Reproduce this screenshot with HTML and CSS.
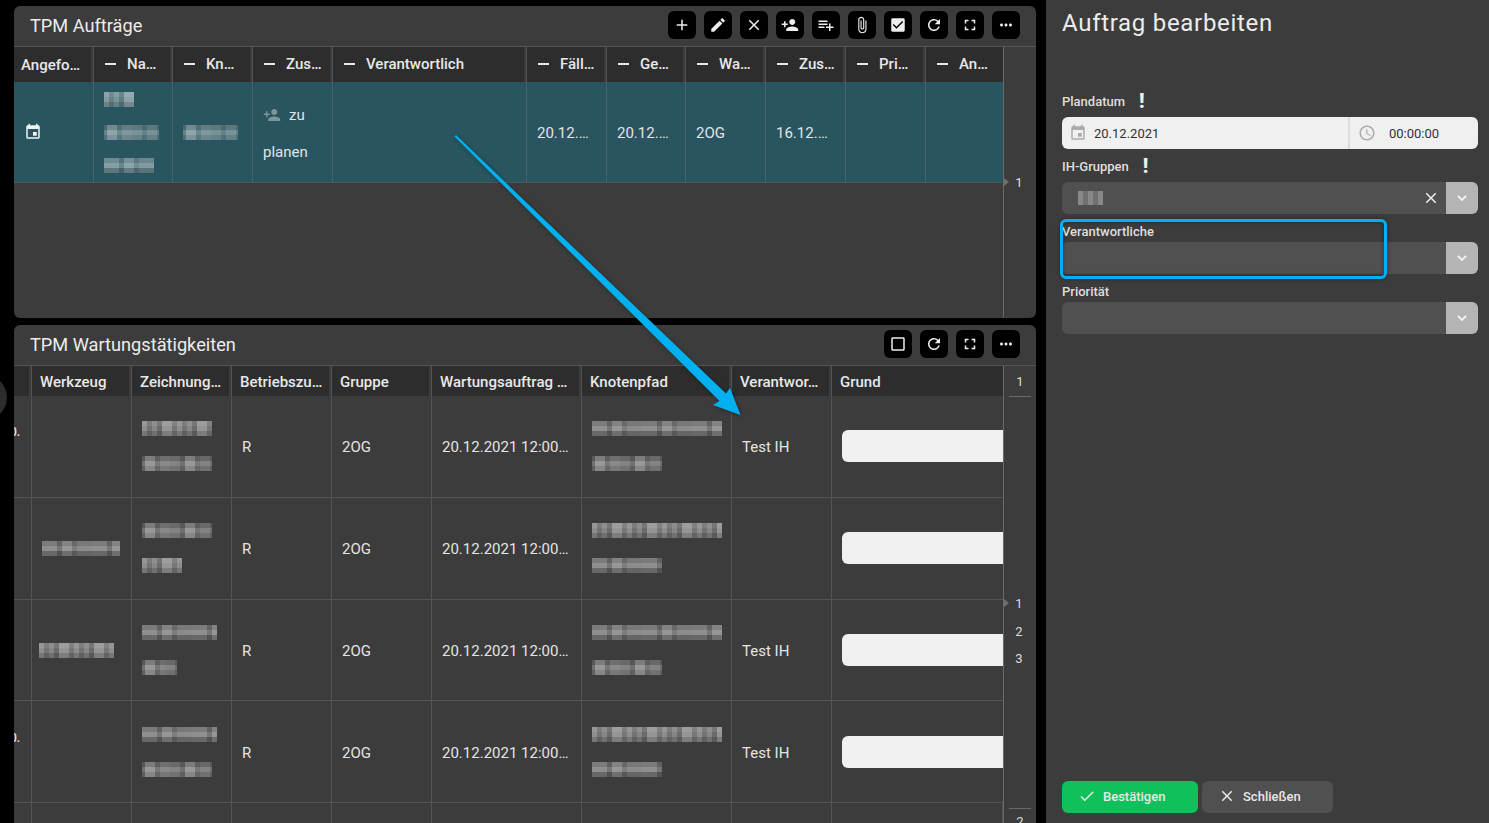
FILE: index.html
```html
<!DOCTYPE html>
<html lang="de">
<head>
<meta charset="UTF-8">
<title>TPM Aufträge</title>
<link rel="stylesheet" href="styles.css">
</head>
<body>
<svg class="icon-defs" xmlns="http://www.w3.org/2000/svg">
    <symbol id="i-plus" viewBox="0 0 24 24"><path d="M19 13h-6v6h-2v-6H5v-2h6V5h2v6h6v2z"/></symbol>
    <symbol id="i-edit" viewBox="0 0 24 24"><path d="M3 17.25V21h3.75L17.81 9.94l-3.75-3.75L3 17.25zM20.71 7.04a1 1 0 0 0 0-1.41l-2.34-2.34a1 1 0 0 0-1.41 0l-1.83 1.83 3.75 3.75 1.83-1.83z"/></symbol>
    <symbol id="i-close" viewBox="0 0 24 24"><path d="M19 6.41L17.59 5 12 10.59 6.41 5 5 6.41 10.59 12 5 17.59 6.41 19 12 13.41 17.59 19 19 17.59 13.41 12z"/></symbol>
    <symbol id="i-person-add" viewBox="0 0 24 24"><path d="M15 12c2.21 0 4-1.79 4-4s-1.79-4-4-4-4 1.79-4 4 1.79 4 4 4zm-9-2V7H4v3H1v2h3v3h2v-3h3v-2H6zm9 4c-2.67 0-8 1.34-8 4v2h16v-2c0-2.66-5.33-4-8-4z"/></symbol>
    <symbol id="i-playlist" viewBox="0 0 24 24"><path d="M14 10H2v2h12v-2zm0-4H2v2h12V6zm4 8v-4h-2v4h-4v2h4v4h2v-4h4v-2h-4zM2 16h8v-2H2v2z"/></symbol>
    <symbol id="i-attach" viewBox="0 0 24 24"><path d="M16.5 6v11.5c0 2.21-1.79 4-4 4s-4-1.79-4-4V5c0-1.38 1.12-2.5 2.5-2.5s2.5 1.12 2.5 2.5v10.5c0 .55-.45 1-1 1s-1-.45-1-1V6H10v9.5c0 1.38 1.12 2.5 2.5 2.5s2.5-1.12 2.5-2.5V5c0-2.21-1.79-4-4-4S7 2.79 7 5v12.5c0 3.04 2.46 5.5 5.5 5.5s5.5-2.46 5.5-5.5V6h-1.5z"/></symbol>
    <symbol id="i-checkbox" viewBox="0 0 24 24"><path d="M19 3H5c-1.11 0-2 .9-2 2v14c0 1.1.89 2 2 2h14c1.11 0 2-.9 2-2V5c0-1.1-.89-2-2-2zm-9 14l-5-5 1.41-1.41L10 14.17l7.59-7.59L19 8l-9 9z"/></symbol>
    <symbol id="i-checkbox-blank" viewBox="0 0 24 24"><path d="M19 5v14H5V5h14m0-2H5c-1.1 0-2 .9-2 2v14c0 1.1.9 2 2 2h14c1.1 0 2-.9 2-2V5c0-1.1-.9-2-2-2z"/></symbol>
    <symbol id="i-refresh" viewBox="0 0 24 24"><path d="M17.65 6.35A7.958 7.958 0 0 0 12 4c-4.42 0-7.99 3.58-7.99 8s3.57 8 7.99 8c3.73 0 6.84-2.55 7.73-6h-2.08A5.99 5.99 0 0 1 12 18c-3.31 0-6-2.69-6-6s2.69-6 6-6c1.66 0 3.14.69 4.22 1.78L13 11h7V4l-2.35 2.35z"/></symbol>
    <symbol id="i-fullscreen" viewBox="0 0 24 24"><path d="M7 14H5v5h5v-2H7v-3zm-2-4h2V7h3V5H5v5zm12 7h-3v2h5v-5h-2v3zM14 5v2h3v3h2V5h-5z"/></symbol>
    <symbol id="i-more" viewBox="0 0 24 24"><path d="M6 10c-1.1 0-2 .9-2 2s.9 2 2 2 2-.9 2-2-.9-2-2-2zm12 0c-1.1 0-2 .9-2 2s.9 2 2 2 2-.9 2-2-.9-2-2-2zm-6 0c-1.1 0-2 .9-2 2s.9 2 2 2 2-.9 2-2-.9-2-2-2z"/></symbol>
    <symbol id="i-event" viewBox="0 0 24 24"><path d="M17 12h-5v5h5v-5zM16 1v2H8V1H6v2H5c-1.11 0-1.99.9-1.99 2L3 19a2 2 0 0 0 2 2h14c1.1 0 2-.9 2-2V5c0-1.1-.9-2-2-2h-1V1h-2zm3 18H5V8h14v11z"/></symbol>
    <symbol id="i-clock" viewBox="0 0 24 24"><path d="M11.99 2C6.47 2 2 6.48 2 12s4.47 10 9.99 10C17.52 22 22 17.52 22 12S17.52 2 11.99 2zM12 20c-4.42 0-8-3.58-8-8s3.58-8 8-8 8 3.58 8 8-3.58 8-8 8zm.5-13H11v6l5.25 3.15.75-1.23-4.5-2.67z"/></symbol>
    <symbol id="i-check" viewBox="0 0 24 24"><path d="M9 16.17L4.83 12l-1.42 1.41L9 19 21 7l-1.41-1.41z"/></symbol>
    <symbol id="i-chevron" viewBox="0 0 24 24"><path d="M16.59 8.59L12 13.17 7.41 8.59 6 10l6 6 6-6z"/></symbol>
</svg>

<div class="app">
    <div class="left-column">
        <section class="panel panel-orders">
            <header class="panel-header">
                <h2 class="panel-title">TPM Aufträge</h2>
                <div class="toolbar">
                    <button class="tool-btn"><svg class="icon"><use href="#i-plus"/></svg></button>
                    <button class="tool-btn"><svg class="icon"><use href="#i-edit"/></svg></button>
                    <button class="tool-btn"><svg class="icon"><use href="#i-close"/></svg></button>
                    <button class="tool-btn"><svg class="icon"><use href="#i-person-add"/></svg></button>
                    <button class="tool-btn"><svg class="icon"><use href="#i-playlist"/></svg></button>
                    <button class="tool-btn"><svg class="icon"><use href="#i-attach"/></svg></button>
                    <button class="tool-btn"><svg class="icon"><use href="#i-checkbox"/></svg></button>
                    <button class="tool-btn"><svg class="icon"><use href="#i-refresh"/></svg></button>
                    <button class="tool-btn"><svg class="icon"><use href="#i-fullscreen"/></svg></button>
                    <button class="tool-btn"><svg class="icon"><use href="#i-more"/></svg></button>
                </div>
            </header>
            <div class="table-wrap">
                <div class="grid grid-orders">
                    <div class="th"><span class="th-text">Angefo…</span></div>
                    <div class="th th-group"><span class="dash"></span><span class="th-text">Na…</span></div>
                    <div class="th th-group"><span class="dash"></span><span class="th-text">Kn…</span></div>
                    <div class="th th-group"><span class="dash"></span><span class="th-text">Zus…</span></div>
                    <div class="th th-group"><span class="dash"></span><span class="th-text">Verantwortlich</span></div>
                    <div class="th th-group"><span class="dash"></span><span class="th-text">Fäll…</span></div>
                    <div class="th th-group"><span class="dash"></span><span class="th-text">Ge…</span></div>
                    <div class="th th-group"><span class="dash"></span><span class="th-text">Wa…</span></div>
                    <div class="th th-group"><span class="dash"></span><span class="th-text">Zus…</span></div>
                    <div class="th th-group"><span class="dash"></span><span class="th-text">Pri…</span></div>
                    <div class="th th-group"><span class="dash"></span><span class="th-text">An…</span></div>

                    <div class="td td-selected td-icon"><svg class="icon icon-event"><use href="#i-event"/></svg></div>
                    <div class="td td-selected"><div class="stack stack-name"><span class="mosaic w30"></span><span class="mosaic mosaic-b w55"></span><span class="mosaic mosaic-c w50"></span></div></div>
                    <div class="td td-selected"><span class="mosaic mosaic-b w55"></span></div>
                    <div class="td td-selected td-state">
                        <div class="state-line"><svg class="icon icon-person"><use href="#i-person-add"/></svg><span>zu</span></div>
                        <div class="state-line">planen</div>
                    </div>
                    <div class="td td-selected"></div>
                    <div class="td td-selected"><span class="td-text">20.12.…</span></div>
                    <div class="td td-selected"><span class="td-text">20.12.…</span></div>
                    <div class="td td-selected"><span class="td-text">2OG</span></div>
                    <div class="td td-selected"><span class="td-text">16.12.…</span></div>
                    <div class="td td-selected"></div>
                    <div class="td td-selected"></div>
                </div>
                <aside class="rail">
                    <div class="rail-num rail-current rail-orders">1</div>
                </aside>
            </div>
        </section>

        <section class="panel panel-tasks">
            <header class="panel-header">
                <h2 class="panel-title">TPM Wartungstätigkeiten</h2>
                <div class="toolbar">
                    <button class="tool-btn"><svg class="icon"><use href="#i-checkbox-blank"/></svg></button>
                    <button class="tool-btn"><svg class="icon"><use href="#i-refresh"/></svg></button>
                    <button class="tool-btn"><svg class="icon"><use href="#i-fullscreen"/></svg></button>
                    <button class="tool-btn"><svg class="icon"><use href="#i-more"/></svg></button>
                </div>
            </header>
            <div class="table-wrap">
                <div class="grid grid-tasks">
                    <div class="th"></div>
                    <div class="th"><span class="th-text">Werkzeug</span></div>
                    <div class="th"><span class="th-text">Zeichnung…</span></div>
                    <div class="th"><span class="th-text">Betriebszu…</span></div>
                    <div class="th"><span class="th-text">Gruppe</span></div>
                    <div class="th"><span class="th-text">Wartungsauftrag …</span></div>
                    <div class="th"><span class="th-text">Knotenpfad</span></div>
                    <div class="th"><span class="th-text">Verantwor…</span></div>
                    <div class="th"><span class="th-text">Grund</span></div>

                    <div class="td td-cut"><span>0.</span></div>
                    <div class="td"></div>
                    <div class="td"><div class="stack"><span class="mosaic w70"></span><span class="mosaic mosaic-b w70"></span></div></div>
                    <div class="td"><span class="td-text">R</span></div>
                    <div class="td"><span class="td-text">2OG</span></div>
                    <div class="td"><span class="td-text">20.12.2021 12:00…</span></div>
                    <div class="td"><div class="stack"><span class="mosaic mosaic-c w130"></span><span class="mosaic mosaic-b w70"></span></div></div>
                    <div class="td"><span class="td-text">Test IH</span></div>
                    <div class="td td-reason"><span class="reason-input"></span></div>

                    <div class="td td-cut"></div>
                    <div class="td"><span class="mosaic mosaic-c w78"></span></div>
                    <div class="td"><div class="stack"><span class="mosaic mosaic-b w70"></span><span class="mosaic w40"></span></div></div>
                    <div class="td"><span class="td-text">R</span></div>
                    <div class="td"><span class="td-text">2OG</span></div>
                    <div class="td"><span class="td-text">20.12.2021 12:00…</span></div>
                    <div class="td"><div class="stack"><span class="mosaic w130"></span><span class="mosaic mosaic-c w70"></span></div></div>
                    <div class="td"></div>
                    <div class="td td-reason"><span class="reason-input"></span></div>

                    <div class="td td-cut"></div>
                    <div class="td"><span class="mosaic w75 nudge-left"></span></div>
                    <div class="td"><div class="stack"><span class="mosaic mosaic-c w75"></span><span class="mosaic mosaic-b w35"></span></div></div>
                    <div class="td"><span class="td-text">R</span></div>
                    <div class="td"><span class="td-text">2OG</span></div>
                    <div class="td"><span class="td-text">20.12.2021 12:00…</span></div>
                    <div class="td"><div class="stack"><span class="mosaic mosaic-c w130"></span><span class="mosaic mosaic-b w70"></span></div></div>
                    <div class="td"><span class="td-text">Test IH</span></div>
                    <div class="td td-reason"><span class="reason-input"></span></div>

                    <div class="td td-cut"><span>0.</span></div>
                    <div class="td"></div>
                    <div class="td"><div class="stack"><span class="mosaic mosaic-c w75"></span><span class="mosaic mosaic-b w70"></span></div></div>
                    <div class="td"><span class="td-text">R</span></div>
                    <div class="td"><span class="td-text">2OG</span></div>
                    <div class="td"><span class="td-text">20.12.2021 12:00…</span></div>
                    <div class="td"><div class="stack"><span class="mosaic w130"></span><span class="mosaic mosaic-c w70"></span></div></div>
                    <div class="td"><span class="td-text">Test IH</span></div>
                    <div class="td td-reason"><span class="reason-input"></span></div>

                    <div class="td td-cut"></div>
                    <div class="td"></div>
                    <div class="td"></div>
                    <div class="td"></div>
                    <div class="td"></div>
                    <div class="td"></div>
                    <div class="td"></div>
                    <div class="td"></div>
                    <div class="td"></div>
                </div>
                <aside class="rail">
                    <div class="rail-head">1</div>
                    <div class="rail-list">
                        <div class="rail-num rail-current">1</div>
                        <div class="rail-num">2</div>
                        <div class="rail-num">3</div>
                    </div>
                    <div class="rail-foot">2</div>
                </aside>
            </div>
        </section>
    </div>

    <aside class="sidebar">
        <h1 class="sidebar-title">Auftrag bearbeiten</h1>
        <form class="edit-form">
            <div class="field">
                <label class="field-label field-label-required">Plandatum<b class="required">!</b></label>
                <div class="date-input">
                    <div class="date-part"><svg class="icon icon-input"><use href="#i-event"/></svg><span>20.12.2021</span></div>
                    <div class="time-part"><svg class="icon icon-input"><use href="#i-clock"/></svg><span>00:00:00</span></div>
                </div>
            </div>
            <div class="field">
                <label class="field-label field-label-required">IH-Gruppen<b class="required">!</b></label>
                <div class="select">
                    <span class="select-value"><span class="mosaic mosaic-chip"></span></span>
                    <svg class="icon icon-clear"><use href="#i-close"/></svg>
                    <span class="select-arrow"><svg class="icon icon-chevron"><use href="#i-chevron"/></svg></span>
                </div>
            </div>
            <div class="field field-marked">
                <label class="field-label">Verantwortliche</label>
                <div class="select">
                    <span class="select-value"></span>
                    <span class="select-arrow"><svg class="icon icon-chevron"><use href="#i-chevron"/></svg></span>
                </div>
                <div class="highlight-box"></div>
            </div>
            <div class="field">
                <label class="field-label">Priorität</label>
                <div class="select">
                    <span class="select-value"></span>
                    <span class="select-arrow"><svg class="icon icon-chevron"><use href="#i-chevron"/></svg></span>
                </div>
            </div>
        </form>
        <footer class="sidebar-footer">
            <button class="action-btn action-confirm"><svg class="icon"><use href="#i-check"/></svg><span>Bestätigen</span></button>
            <button class="action-btn action-close"><svg class="icon"><use href="#i-close"/></svg><span>Schließen</span></button>
        </footer>
    </aside>
</div>

<div class="side-handle"></div>

<svg class="arrow-overlay" viewBox="0 0 1489 823" xmlns="http://www.w3.org/2000/svg">
    <polygon class="arrow-shape" points="454.5,136.5 456,135 726,393.5 730,388 740.5,415 713,405 719.5,401"/>
</svg>
</body>
</html>
```

FILE: styles.css
```css
:root {
    --panel-color: #3c3c3c;
    --head-color: #2d2d2d;
    --line-color: #545454;
    --text-color: #e4e4e4;
    --field-color: #505050;
    --input-color: #f0f0f0;
    --arrow-color: #00b0f0;
}
* {
    box-sizing: border-box;
}
html, body {
    height: 100%;
}
body {
    margin: 0;
    background-color: #000;
    color: var(--text-color);
    font-family: Roboto, "Liberation Sans", sans-serif;
    overflow: hidden;
}
.icon-defs {
    display: none;
}
.icon {
    display: block;
    width: 18px;
    height: 18px;
    fill: currentColor;
    flex: none;
}
.app {
    display: flex;
    height: 100vh;
}
.left-column {
    display: flex;
    flex-direction: column;
    gap: 7px;
    width: 1022px;
    margin-left: 14px;
    padding-top: 6px;
}
.panel {
    display: flex;
    flex-direction: column;
    background-color: var(--panel-color);
    border-radius: 6px 6px 0 0;
    overflow: hidden;
}
.panel-orders {
    height: 312px;
    border-radius: 6px;
}
.panel-tasks {
    flex: 1;
    min-height: 0;
}
.panel-header {
    display: flex;
    justify-content: space-between;
    align-items: center;
    flex: none;
    height: 41px;
    padding: 0 16px 2px;
    border-bottom: 1px solid var(--line-color);
}
.panel-title {
    margin: 0;
    font-size: 18.2px;
    font-weight: 400;
    color: #ececec;
}
.toolbar {
    display: flex;
    gap: 8px;
}
.tool-btn {
    display: flex;
    align-items: center;
    justify-content: center;
    width: 28px;
    height: 28px;
    padding: 0;
    border: none;
    border-radius: 6px;
    background-color: #000;
    color: #eee;
}
.table-wrap {
    display: flex;
    flex: 1;
    min-height: 0;
}
.grid {
    display: grid;
    width: 989px;
    flex: none;
    align-content: start;
}
.grid-orders {
    grid-template-columns: 80px 79px 80px 80px 194px 80px 79px 80px 80px 80px 77px;
    grid-template-rows: 35px 101px;
}
.grid-tasks {
    grid-template-columns: 18px 100px 100px 100px 100px 150px 150px 100px 171px;
    grid-template-rows: 30px 102px 102px 101px 102px 102px;
}
.th {
    display: flex;
    align-items: center;
    min-width: 0;
    padding: 0 0 0 8px;
    border-right: 1px solid var(--line-color);
    background: linear-gradient(var(--head-color), var(--head-color)) no-repeat left top / calc(100% - 2px) 100%;
    font-size: 15px;
    font-weight: 500;
    color: #e8e8e8;
}
.th:nth-child(11), .grid-tasks .th:nth-child(9) {
    border-right: none;
    background-size: 100% 100%;
}
.grid-orders .th:first-child {
    padding-left: 7px;
}
.grid-tasks .th {
    padding-top: 1px;
}
.th-group {
    padding-left: 11px;
    padding-bottom: 2px;
}
.th-text, .td-text {
    white-space: nowrap;
}
.dash {
    flex: none;
    width: 11px;
    height: 2px;
    margin-right: 11px;
    background-color: #e8e8e8;
}
.td {
    display: flex;
    align-items: center;
    min-width: 0;
    padding: 0 10px;
    border-right: 1px solid var(--line-color);
    border-bottom: 1px solid var(--line-color);
    font-size: 15px;
}
/* the first two task rows sit a pixel higher */
.grid-tasks .td:nth-child(-n+27) {
    padding-bottom: 1px;
}
.td-text {
    padding-top: 2px;
}
.td-selected {
    background-color: #285560;
    border-right-color: #46626a;
}
.td-selected:nth-child(22) {
    border-right: none;
}
.icon-event {
    color: #f2f2f2;
}
.td-state {
    display: block;
    padding-top: 14px;
}
.state-line {
    display: flex;
    align-items: center;
    gap: 8px;
    height: 37px;
}
.icon-person {
    opacity: 0.45;
}
.stack {
    display: flex;
    flex-direction: column;
    gap: 20px;
}
.stack-name {
    gap: 18px;
}
.td-cut {
    padding-left: 0;
    padding-right: 0;
    overflow: hidden;
    font-size: 12px;
    font-weight: 500;
}
.td-cut span {
    margin-left: -4px;
    margin-bottom: 28px;
}
.td-reason {
    border-right: none;
    overflow: hidden;
}
.reason-input {
    flex: none;
    width: 200px;
    height: 32px;
    border-radius: 6px;
    background-color: var(--input-color);
}

/* blurred values from the original are kept as pixel blocks */
.mosaic {
    display: block;
    flex: none;
    height: 15px;
    background-image:
        linear-gradient(180deg, rgba(255,255,255,.08) 0 5px, rgba(0,0,0,0) 5px 10px, rgba(0,0,0,.16) 10px 15px),
        repeating-linear-gradient(90deg, rgba(255,255,255,.42) 0 5px, rgba(255,255,255,.28) 5px 10px, rgba(255,255,255,.38) 10px 15px, rgba(255,255,255,.24) 15px 20px, rgba(255,255,255,.46) 20px 30px, rgba(255,255,255,.3) 30px 35px);
}
.mosaic-b {
    background-position: 0 0, -12px 0;
    background-image:
        linear-gradient(180deg, rgba(0,0,0,.15) 0 5px, rgba(255,255,255,.06) 5px 10px, rgba(0,0,0,.08) 10px 15px),
        repeating-linear-gradient(90deg, rgba(255,255,255,.32) 0 10px, rgba(255,255,255,.22) 10px 15px, rgba(255,255,255,.44) 15px 25px, rgba(255,255,255,.26) 25px 30px, rgba(255,255,255,.36) 30px 40px);
}
.mosaic-c {
    background-image:
        linear-gradient(180deg, rgba(0,0,0,.05) 0 5px, rgba(255,255,255,.1) 5px 10px, rgba(0,0,0,.2) 10px 15px),
        repeating-linear-gradient(90deg, rgba(255,255,255,.36) 0 15px, rgba(255,255,255,.22) 15px 20px, rgba(255,255,255,.4) 20px 30px, rgba(255,255,255,.26) 30px 35px, rgba(255,255,255,.34) 35px 50px);
}
.mosaic-chip {
    width: 25px;
    height: 14px;
    background-image: repeating-linear-gradient(90deg, rgba(255,255,255,.32) 0 5px, rgba(255,255,255,.18) 5px 10px);
}
.w30 { width: 30px; }
.w35 { width: 35px; }
.w40 { width: 40px; }
.w50 { width: 50px; }
.w55 { width: 55px; }
.w70 { width: 70px; }
.w75 { width: 75px; }
.w78 { width: 78px; }
.w130 { width: 130px; }
.nudge-left {
    margin-left: -3px;
}

.rail {
    flex: 1;
    min-width: 0;
    padding-right: 2px;
    border-left: 1px solid #696969;
    font-size: 13px;
    text-align: center;
    color: #dcdcdc;
}
.rail-num {
    position: relative;
    height: 27.5px;
    line-height: 27.5px;
}
.rail-orders {
    margin-top: 122px;
}
.rail-current::before {
    content: "";
    position: absolute;
    left: 0;
    top: 9px;
    border-left: 5px solid #6f6f6f;
    border-top: 4px solid transparent;
    border-bottom: 4px solid transparent;
}
.rail-head {
    height: 31px;
    margin: 0 3px 0 5px;
    line-height: 31px;
    border-bottom: 1px solid #6a6a6a;
}
.rail-list {
    margin-top: 193px;
}
.rail-foot {
    margin: 135px 3px 0 5px;
    padding-top: 5px;
    border-top: 1px solid #6a6a6a;
}

.sidebar {
    display: flex;
    flex-direction: column;
    flex: 1;
    min-width: 0;
    margin-left: 10px;
    padding: 8px 11px 10px 16px;
    background-color: var(--panel-color);
}
.sidebar-title {
    margin: 0;
    height: 30px;
    font-size: 24px;
    line-height: 30px;
    font-weight: 400;
    letter-spacing: 0.7px;
    color: #ececec;
}
.edit-form {
    display: flex;
    flex-direction: column;
    gap: 8px;
    margin-top: 54px;
}
.field {
    position: relative;
}
.field-label {
    display: flex;
    align-items: center;
    height: 18px;
    margin-bottom: 2px;
    font-size: 13px;
    font-weight: 500;
    color: #dedede;
}
.field-label-required {
    margin-bottom: 7px;
}
.required {
    margin-left: 14px;
    font-size: 20px;
    font-weight: 900;
    color: #eee;
}
.date-input {
    display: flex;
    height: 32px;
    border-radius: 6px;
    background-color: var(--input-color);
    color: #333;
    font-size: 13px;
}
.date-part, .time-part {
    display: flex;
    align-items: center;
}
.date-part {
    width: 288px;
    padding-left: 7px;
    gap: 7px;
    border-right: 2px solid #dcdcdc;
}
.time-part {
    flex: 1;
    padding-left: 8px;
    gap: 13px;
}
.icon-input {
    color: #aaa;
}
.select {
    display: flex;
    align-items: center;
    height: 32px;
    border-radius: 6px;
    background-color: var(--field-color);
    overflow: hidden;
}
.select-value {
    flex: 1;
    padding-left: 16px;
}
.icon-clear {
    margin-right: 6px;
    color: #eee;
}
.select-arrow {
    display: flex;
    align-items: center;
    justify-content: center;
    width: 32px;
    height: 100%;
    background-color: #b4b4b4;
    color: #f2f2f2;
}
.icon-chevron {
    stroke: currentColor;
    stroke-width: 0.8;
}
.highlight-box {
    position: absolute;
    left: -2px;
    top: -3px;
    width: 327px;
    height: 60px;
    border: 3px solid var(--arrow-color);
    border-radius: 6px;
    box-shadow: 0 0 4px rgba(0, 0, 0, 0.35), inset 0 0 4px rgba(0, 0, 0, 0.35);
}
.sidebar-footer {
    display: flex;
    gap: 4px;
    margin-top: auto;
}
.action-btn {
    display: flex;
    align-items: center;
    gap: 7px;
    height: 32px;
    padding: 0 0 2px 16px;
    border: none;
    border-radius: 6px;
    font-family: inherit;
    font-size: 13px;
    font-weight: 500;
    color: #e8e8e8;
}
.action-confirm {
    width: 136px;
    background-color: #10c05a;
}
.action-close {
    width: 131px;
    background-color: var(--field-color);
}

/* overlays: the round handle at the window edge and the drawn-on arrow */
.side-handle {
    position: absolute;
    left: -38px;
    top: 375px;
    width: 45px;
    height: 45px;
    border-radius: 50%;
    background-color: #2d2d2d;
}
.arrow-overlay {
    position: absolute;
    left: 0;
    top: 0;
    width: 1489px;
    height: 823px;
    pointer-events: none;
}
.arrow-shape {
    fill: var(--arrow-color);
    filter: drop-shadow(1px 1px 2px rgba(0, 0, 0, 0.3));
}
```
